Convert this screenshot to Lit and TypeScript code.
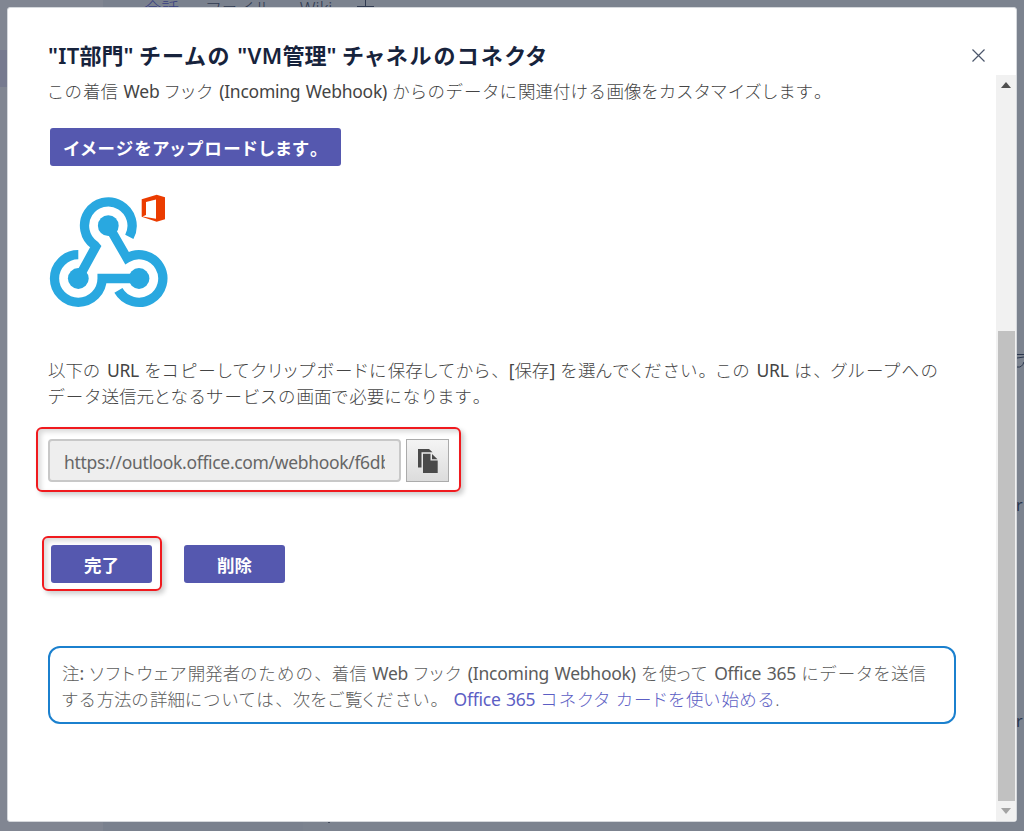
import { LitElement, html, css } from 'lit';
import { customElement, property } from 'lit/decorators.js';

// Latin words, kana, kanji and full-width punctuation are spaced differently
const RUNS = /[、。]+|[ぁ-ヿ]+|[\u0020-\u007e]+|[^\u0020-\u007eぁ-ヿ、。]+/g;

function runClass(text: string) {
  if (/^[、。]/.test(text)) return 'punct';
  if (/^[ぁ-ヿ]/.test(text)) return 'kana';
  if (/^[\u0020-\u007e]/.test(text)) return 'latin';
  return 'kanji';
}

function runs(text: string) {
  return (text.match(RUNS) || []).map((run) => html`<span class="${runClass(run)}">${run}</span>`);
}

const runStyles = css`
  .kana {
    font-feature-settings: 'palt';
    letter-spacing: var(--kana, 1.55px);
  }
  .latin {
    letter-spacing: var(--latin, -0.25px);
    word-spacing: var(--word, 1.2px);
    font-weight: var(--latin-weight, 400);
  }
`;

@customElement('webhook-logo')
export class WebhookLogo extends LitElement {
  static styles = css`
    :host {
      display: block;
      width: 120px;
      height: 120px;
    }
    svg {
      display: block;
    }
    .ring {
      fill: none;
      stroke: #29a8e0;
      stroke-width: 9.3;
      stroke-linejoin: miter;
    }
    .dot {
      fill: #29a8e0;
    }
    .office {
      fill: #eb3c00;
    }
    .door {
      fill: #fff;
    }
  `;

  render() {
    return html`<svg width="120" height="120" viewBox="0 0 120 120">
      <path class="ring" d="M80.3 45.9A23.8 23.8 0 1 0 45.7 54.2L46.8 55.5L29.3 87.5" />
      <path class="ring" d="M59.3 34.7L78 67A23.8 23.8 0 1 1 69.4 99.4" />
      <path class="ring" d="M29.3 63.7A23.8 23.8 0 1 0 53.1 87.5H90" />
      <circle class="dot" cx="59.3" cy="34.7" r="10.4" />
      <circle class="dot" cx="29.3" cy="87.5" r="10.4" />
      <circle class="dot" cx="90" cy="87.5" r="10.4" />
      <path class="office" d="M92.7 8.3L107.7 3.7L116 6.3V28.3L107.7 30.7L92.7 25.7Z" />
      <path class="door" d="M97 11L107 8.5V27.7L93.5 25.6L97 24Z" />
    </svg>`;
  }
}

@customElement('purple-button')
export class PurpleButton extends LitElement {
  @property({ type: String }) label = '';

  static styles = [
    runStyles,
    css`
      :host {
        display: block;
        --kana: 1.45px;
      }
      .button {
        display: block;
        width: 100%;
        height: 38px;
        padding: 2px 0 0;
        border: 0;
        border-radius: 3px;
        background: #5558af;
        color: #fff;
        font: 700 17.5px/36px 'Noto Sans', 'Noto Sans CJK JP', sans-serif;
        white-space: nowrap;
      }
    `,
  ];

  render() {
    return html`<button class="button">${runs(this.label)}</button>`;
  }
}

@customElement('app-root')
export class AppRoot extends LitElement {
  static styles = [
    runStyles,
    css`
      :host {
        display: block;
        position: relative;
        width: 1024px;
        height: 831px;
        overflow: hidden;
        background: #7c838f;
        color: #444;
        font: 17.5px/26px 'Noto Sans', 'Noto Sans CJK JP', sans-serif;
      }
      * {
        box-sizing: border-box;
      }
      .page {
        position: absolute;
        inset: 0;
        display: grid;
        grid-template-columns: 103px 200px 1fr;
      }
      .rail {
        padding-top: 50px;
        background: #818692;
      }
      .selected {
        height: 37px;
        background: #767a8f;
      }
      .channels {
        background: #7a818e;
      }
      .tabs {
        position: absolute;
        top: -5px;
        left: 144px;
        display: flex;
        gap: 27px;
        color: #303a50;
        font-weight: 300;
        line-height: 26px;
      }
      .tabs .on {
        color: #383f80;
      }
      .plus {
        display: block;
        margin: 2px 0 0 -2px;
      }
      .peek {
        position: absolute;
        left: 1016px;
        color: #2b374d;
        font-size: 16px;
      }
      .peek.one {
        top: 492px;
      }
      .peek.two {
        top: 708px;
      }
      .curl {
        position: absolute;
        left: 1016px;
        top: 352px;
      }
      .speck {
        position: absolute;
        left: 328px;
        top: 822px;
        width: 2px;
        height: 1px;
        background: #444c5c;
      }
      .dialog {
        position: relative;
        display: flex;
        flex-direction: column;
        width: 1010px;
        height: 815px;
        margin: 7px 0 0 7px;
        border: 1px solid #d5d8dc;
        border-radius: 3px;
        background: #fff;
      }
      .head {
        display: flex;
        flex: none;
        align-items: center;
        justify-content: space-between;
        height: 67px;
        padding: 26px 29px 0 40px;
      }
      h1 {
        --kana: 2.1px;
        --latin: 0.3px;
        --word: 0;
        --latin-weight: 600;
        margin: 0;
        color: #17233c;
        font: 700 22px/32px 'Noto Sans', 'Noto Sans CJK JP', sans-serif;
        white-space: nowrap;
      }
      .body {
        display: flex;
        flex: 1;
        min-height: 0;
      }
      .content {
        flex: 1;
        min-width: 0;
        padding: 3px 0 0 40px;
      }
      .line {
        display: block;
        height: 26px;
        white-space: nowrap;
        font-weight: 300;
      }
      .upload {
        width: 291px;
        margin: 24px 0 0 2px;
      }
      webhook-logo {
        margin: 25px 0 46px 1px;
      }
      .url {
        display: flex;
        gap: 5px;
        width: 425px;
        height: 65px;
        margin: 18px 0 0 -12px;
        padding: 10px;
      }
      .framed {
        border: 2px solid #f01a1e;
        border-radius: 6px;
        box-shadow: 3px 3px 5px rgba(0, 0, 0, 0.2), inset 3px 3px 5px rgba(0, 0, 0, 0.15);
      }
      .field {
        width: 353px;
        height: 43px;
        padding: 2px 14px 0;
        border: 2px solid #c8c8c8;
        border-radius: 4px;
        background: #eee;
        color: #666;
        font: 17.5px/38px 'Noto Sans', sans-serif;
        letter-spacing: -0.33px;
      }
      .copy {
        display: grid;
        place-items: center;
        width: 43px;
        height: 43px;
        padding: 0;
        border: 1px solid #ababab;
        background: linear-gradient(#f4f4f4, #dcdcdc);
      }
      .actions {
        display: flex;
        align-items: center;
        gap: 22px;
        margin: 44px 0 0 -6px;
      }
      .done {
        width: 120px;
        height: 55px;
        padding: 7px 8px 7px 7px;
      }
      .remove {
        width: 101px;
      }
      .note {
        width: 908px;
        height: 78px;
        margin-top: 55px;
        padding: 12px;
        border: 2px solid #1b80ce;
        border-radius: 12px;
        color: #5c5c5c;
      }
      a {
        color: #5c5ec4;
        text-decoration: none;
      }
      .scroll {
        display: flex;
        flex-direction: column;
        align-items: center;
        width: 20px;
        background: #f1f1f1;
      }
      .arrow {
        display: grid;
        place-items: center;
        height: 20px;
      }
      .thumb {
        width: 17px;
        height: 470px;
        margin-top: 236px;
        background: #c1c1c1;
      }
    `,
  ];

  render() {
    return html`
      <div class="page">
        <div class="rail"><div class="selected"></div></div>
        <div class="channels"></div>
        <div></div>
      </div>
      <div class="tabs">
        <span class="on">会話</span><span>${runs('ファイル')}</span><span>Wiki</span>
        <svg class="plus" width="18" height="18" fill="none" stroke="#303a50"><path d="M0 9.5H17M8.5 1V18" /></svg>
      </div>
      <span class="peek one">r</span>
      <span class="peek two">r</span>
      <svg class="curl" width="8" height="16" fill="none" stroke="#2b374d"><path d="M1 2.5H8M1 6L8 5M1 15Q6 16 8 10" /></svg>
      <div class="speck"></div>

      <section class="dialog">
        <header class="head">
          <h1>${runs('"IT部門" チームの "VM管理" チャネルのコネクタ')}</h1>
          <svg width="18" height="18" fill="none" stroke="#4b566b" stroke-width="1.2"><path d="M3.5 3.5L15.5 15.5M15.5 3.5L3.5 15.5" /></svg>
        </header>
        <div class="body">
          <main class="content">
            <span class="line">${runs('この着信 Web フック (Incoming Webhook) からのデータに関連付ける画像をカスタマイズします。')}</span>
            <purple-button class="upload" label="イメージをアップロードします。"></purple-button>
            <webhook-logo></webhook-logo>
            <span class="line">${runs('以下の URL をコピーしてクリップボードに保存してから、[保存] を選んでください。この URL は、グループへの')}</span>
            <span class="line">${runs('データ送信元となるサービスの画面で必要になります。')}</span>
            <div class="url framed">
              <input class="field" readonly value="https://outlook.office.com/webhook/f6db2c1e" />
              <button class="copy">
                <svg width="20" height="24" fill="#4a4a4a">
                  <path d="M0 0H11L14.5 3.3H3.5V18.5H0Z" />
                  <path d="M5 4.7H12.5V11.5H19.7V24H5Z" />
                  <path d="M14 5L19.5 10.2H14Z" />
                </svg>
              </button>
            </div>
            <div class="actions">
              <div class="done framed"><purple-button label="完了"></purple-button></div>
              <purple-button class="remove" label="削除"></purple-button>
            </div>
            <div class="note">
              <span class="line">${runs('注: ソフトウェア開発者のための、着信 Web フック (Incoming Webhook) を使って Office 365 にデータを送信')}</span>
              <span class="line">${runs('する方法の詳細については、次をご覧ください。 ')}<a>${runs('Office 365 コネクタ カードを使い始める')}</a>.</span>
            </div>
          </main>
          <div class="scroll">
            <div class="arrow"><svg width="10" height="6"><path fill="#505050" d="M0 6L5 0L10 6Z" /></svg></div>
            <div class="thumb"></div>
            <div class="arrow"><svg width="10" height="6"><path fill="#a3a3a3" d="M0 0L5 6L10 0Z" /></svg></div>
          </div>
        </div>
      </section>
    `;
  }
}
